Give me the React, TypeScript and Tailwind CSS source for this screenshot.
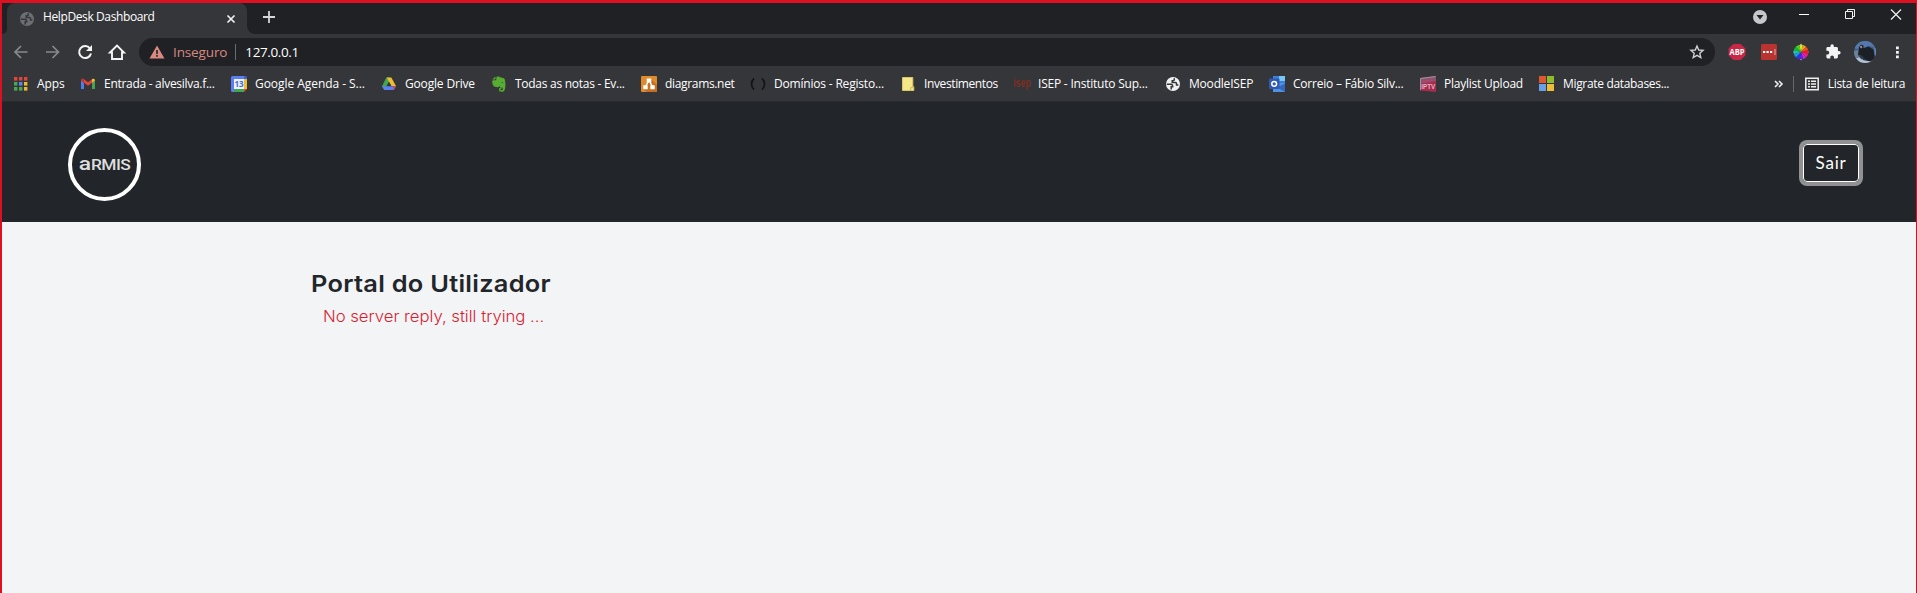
import { useLayoutEffect, useRef, useState, type ReactNode } from "react";

/* Text that spreads its letters over a given advance width. */
function Label({ w, className = "", children }: { w: number; className?: string; children: string }) {
  const ref = useRef<HTMLSpanElement>(null);
  const [spacing, setSpacing] = useState(0);
  useLayoutEffect(() => {
    if (ref.current) {
      const natural = ref.current.offsetWidth - spacing * children.length;
      setSpacing((w - natural) / children.length);
    }
  }, [w, children]);
  return (
    <span ref={ref} style={{ letterSpacing: `${spacing}px` }} className={`shrink-0 whitespace-nowrap ${className}`}>
      {children}
    </span>
  );
}

function Icon({ size = 16, children }: { size?: number; children: ReactNode }) {
  return (
    <svg width={size} height={size} viewBox={`0 0 ${size} ${size}`} className="shrink-0" fill="none">
      {children}
    </svg>
  );
}

const Globe = ({ color, back }: { color: string; back: string }) => (
  <Icon>
    <circle cx="8" cy="8" r="7" fill={color} />
    <path d="M1.8 8.300h4.200q1.700.2 1.700 1.800v.7h-1.500v2.700M9.300 2.200v1.400q0 1.200-1.400 1.200H7.200v1.700h3.300q1 0 1 1.300v1.300h1.900" stroke={back} strokeWidth="1.500" />
  </Icon>
);

const AppsIcon = () => (
  <Icon>
    {[
      ["#e0453a", "#e0453a", "#e0453a"],
      ["#4aa851", "#5a85ee", "#eeb932"],
      ["#4aa851", "#4aa851", "#eeb932"],
    ].map((row, r) =>
      row.map((c, i) => <rect key={`${r}${i}`} x={1 + i * 5} y={1 + r * 5} width="3.4" height="3.6" fill={c} />),
    )}
  </Icon>
);

const GmailIcon = () => (
  <Icon>
    <path d="M1 4v9h3V7z" fill="#4a7df0" />
    <path d="M15 4v9h-3V7z" fill="#41a554" />
    <path d="M1 4.5C1 2.8 2.8 2.2 4 3.2l4 3 4-3v3.6L8 9.8 4 6.8 1 4.7z" fill="#e0453a" />
    <path d="M12 3.2c1.2-1 3-.4 3 1.3L12 7z" fill="#f1bd30" />
    <path d="M1 4.5C1 3.2 2.5 2.4 4 3.2V7z" fill="#bd342d" />
  </Icon>
);

const CalendarIcon = () => (
  <Icon>
    <path d="M0 1.5Q0 0 1.5 0H13v3H3v13H1.5Q0 16 0 14.5z" fill="#5b7ff0" />
    <path d="M13 0h1.5Q16 0 16 1.5V13h-3z" fill="#3a63d8" />
    <rect x="13" y="3" width="3" height="10" fill="#f1bd30" />
    <rect x="3" y="13" width="10" height="3" fill="#41a554" />
    <path d="M13 13h3l-3 3z" fill="#e0453a" />
    <rect x="3" y="3" width="10" height="10" fill="#eef1fb" />
    <text x="8" y="11" textAnchor="middle" fontSize="8" fontWeight="700" fontFamily="Open Sans, sans-serif" fill="#426bd8">
      13
    </text>
  </Icon>
);

const DriveIcon = () => (
  <Icon>
    <path d="M5.3 1.5h3L8 6.2 3.6 14 1 10.2z" fill="#41a554" />
    <path d="M5.8 1.5h4.5L15 10h-4.8z" fill="#f1bd30" />
    <path d="M1 10.2h14L12.8 14H3.3z" fill="#5b7ff0" />
    <path d="M8 5.7 10.4 10H5.6z" fill="#35363a" />
    <path d="M12 10.2h3L12.8 14z" fill="#e0453a" />
  </Icon>
);

const EvernoteIcon = () => (
  <Icon>
    <path
      d="M5.5.8C7 .2 8.3.5 9 1.3l3 .6c1.6.3 1.8 1.3 2.1 3 .4 2.500.5 5.500-.2 8.300-.5 2-1.700 2.500-3.200 2.500-2 0-2.700-1-2.700-2.300 0-1.500 1-2 2.600-1.900v1.300c-.8 0-1.200.2-1.200.7 0 .6.500.8 1.200.8.9 0 1.200-.6 1.200-1.700 0-.8-.5-1.300-1.600-1.400-.9-.1-1.600-.400-1.800-1.300-.6 1.300-1.700 1.400-3 1.200C2.700 10.700 1.500 9.900 1.200 5.300c0-.7.3-1 .9-1h2.200c.7 0 1-.3 1-1z"
      fill="#56ad32"
    />
    <path d="M1.300 3.500 4.500.600v2.200c0 .5-.2.7-.7.7z" fill="#56ad32" />
    <path d="M10.500 6.900c.2-1 1.600-.9 1.900.2z" fill="#35363a" />
  </Icon>
);

const DiagramsIcon = () => (
  <Icon>
    <rect width="16" height="16" rx="1" fill="#df8a2c" />
    <path d="m10 3 6 6v7H6l-4-3z" fill="#c57020" />
    <path d="M8 4 4.500 11M8 4l3.500 7" stroke="#fff" strokeWidth="1.500" />
    <path d="M5.700 2.500h4.600v4H5.700zM2.300 9.300h4.400v4H2.300zM9.300 9.300h4.400v4H9.300z" fill="#fff" />
  </Icon>
);

const BracketsIcon = () => (
  <Icon>
    <path d="M4 2.500C.7 5.500.7 10.500 4 13.500M12 2.500c3.400 3 3.400 8 0 11" stroke="#121315" strokeWidth="1.700" />
  </Icon>
);

const NoteIcon = () => (
  <Icon>
    <path d="M2.500 1.500h10.300v9.300h1v3.700H2.500z" fill="#f5e789" stroke="#d9c768" />
    <path d="M10.800 14.500v-3.200h3" stroke="#cbb75a" />
  </Icon>
);

const IsepIcon = () => (
  <span className="flex h-4 w-4 shrink-0 items-center justify-center">
    <span className="-mt-1 inline-block scale-x-[0.68] font-['Liberation_Sans'] text-[13px] leading-none font-bold text-[#7b2f22]">isep</span>
  </span>
);

const OutlookIcon = () => (
  <Icon>
    <path d="M4 0h12v11H4z" fill="#3d7fda" />
    <path d="M10 0h6v5h-6z" fill="#78c6f3" />
    <path d="M4 7h12v9H4z" fill="#4f94e4" />
    <path d="m8 11.500 8-4V16z" fill="#3568bd" />
    <rect y="2.500" width="10.500" height="10.500" rx="1" fill="#3059b3" />
    <circle cx="5.200" cy="7.800" r="2.400" stroke="#fff" strokeWidth="1.500" />
  </Icon>
);

const IptvIcon = () => (
  <Icon>
    <path d="M0 2 16 0v16L0 14.500z" fill="#a82c50" />
    <path d="M0 2 16 0v5L0 8z" fill="#83576f" />
    <path d="M.5 14V2.500L15.500.6" stroke="#a3919c" />
    <text x="8.300" y="13" textAnchor="middle" fontSize="8" fontWeight="700" fontFamily="Liberation Sans, sans-serif" textLength="14" lengthAdjust="spacingAndGlyphs" fill="#e2b3c2">
      IPTV
    </text>
    <path d="M2.500 5.300 13 4" stroke="#c23d6c" strokeWidth="1.800" strokeDasharray="2 .6" />
  </Icon>
);

const MicrosoftIcon = () => (
  <Icon>
    <path d="M0 0h7v7H0z" fill="#dc5830" />
    <path d="M8 0h7v7H8z" fill="#8fbc2b" />
    <path d="M0 8h7v7H0z" fill="#679fe9" />
    <path d="M8 8h7v7H8z" fill="#ecbd37" />
  </Icon>
);

type Bookmark = { label: string; w: number; cell: string; icon: ReactNode };

const bookmarks: Bookmark[] = [
  { label: "Apps", w: 27.5, cell: "w-[67px]", icon: <AppsIcon /> },
  { label: "Entrada - alvesilva.f...", w: 111, cell: "w-[151px]", icon: <GmailIcon /> },
  { label: "Google Agenda - S...", w: 110, cell: "w-[150px]", icon: <CalendarIcon /> },
  { label: "Google Drive", w: 70, cell: "w-[110px]", icon: <DriveIcon /> },
  { label: "Todas as notas - Ev...", w: 110, cell: "w-[150px]", icon: <EvernoteIcon /> },
  { label: "diagrams.net", w: 69, cell: "w-[109px]", icon: <DiagramsIcon /> },
  { label: "Domínios - Registo...", w: 110, cell: "w-[150px]", icon: <BracketsIcon /> },
  { label: "Investimentos", w: 74, cell: "w-[114px]", icon: <NoteIcon /> },
  { label: "ISEP - Instituto Sup...", w: 110, cell: "w-[151px]", icon: <IsepIcon /> },
  { label: "MoodleISEP", w: 64, cell: "w-[104px]", icon: <Globe color="#f1f1f1" back="#35363a" /> },
  { label: "Correio – Fábio Silv...", w: 110, cell: "w-[151px]", icon: <OutlookIcon /> },
  { label: "Playlist Upload", w: 78.5, cell: "w-[119px]", icon: <IptvIcon /> },
  { label: "Migrate databases...", w: 106.5, cell: "w-[140px]", icon: <MicrosoftIcon /> },
];

function TabStrip() {
  return (
    <div className="flex h-[31px] bg-[#35363a]">
      <div className="h-full w-[5px] rounded-br-lg bg-[#202124]" />
      <div className="h-full w-[240px] bg-[#202124]">
        <div className="flex h-full w-full items-center rounded-t-lg bg-[#35363a] pr-2 pl-3">
          <Globe color="#6b6e72" back="#35363a" />
          <Label w={111} className="-mt-[3px] ml-2 text-[12px] text-white">HelpDesk Dashboard</Label>
          <svg width="10" height="10" viewBox="0 0 10 10" className="mr-[3px] ml-auto">
            <path d="m1.500 1.500 7 7m0-7-7 7" stroke="#f0f0f0" strokeWidth="1.700" />
          </svg>
        </div>
      </div>
      <div className="flex h-full flex-1 rounded-bl-lg bg-[#202124]">
        <svg width="12" height="12" viewBox="0 0 12 12" className="mt-2 ml-4">
          <path d="M6 0v12M0 6h12" stroke="#d5d6d8" strokeWidth="1.800" />
        </svg>
        <svg width="160" height="28" viewBox="0 0 160 28" fill="none" className="mr-[10px] ml-auto">
          <circle cx="14" cy="14" r="7" fill="#c4c7cc" />
          <path d="M10.500 12h7L14 16.500z" fill="#202124" />
          <path d="M53 11.500h10" stroke="#fff" />
          <path d="M99.500 8.500h7v7h-7zM101.500 8.500v-2h7v7h-2" stroke="#f2f2f2" />
          <path d="m145 6.500 10 10m0-10-10 10" stroke="#f2f2f2" strokeWidth="1.200" />
        </svg>
      </div>
    </div>
  );
}

const wheel = ["#c9ec24", "#f5a020", "#f0521e", "#ee1c24", "#ee2090", "#c724d6", "#5a22df", "#2638e8", "#1d9bea", "#18c9a5", "#13bb35", "#50d027"];

function Toolbar() {
  return (
    <div className="flex h-9 items-center bg-[#35363a]">
      <svg width="116" height="20" viewBox="0 0 116 20" fill="none" className="ml-[10px] shrink-0">
        <path d="M15.500 10H3.500m5.500-6-6 6 6 6" stroke="#88898c" strokeWidth="1.700" />
        <path d="M34 10h12m-5.500-6 6 6-6 6" stroke="#88898c" strokeWidth="1.700" />
        <path d="M78 6.500A6 6 0 1 0 79 11.500" stroke="#f4f4f4" strokeWidth="2" />
        <path d="M80 3v6h-6z" fill="#f4f4f4" />
        <path d="M98 10.500 105 3.500l7 7h-2V17h-10v-6.500z" stroke="#f4f4f4" strokeWidth="1.900" />
      </svg>
      <div className="ml-[11px] flex h-7 w-[1576px] items-center rounded-full bg-[#202124]">
        <svg width="16" height="14" viewBox="0 0 16 14" className="ml-2.5">
          <path d="M8 .5 15.500 13.500H.5z" fill="#d88980" />
          <path d="M8 5v4M8 10v1.800" stroke="#202124" strokeWidth="1.600" />
        </svg>
        <Label w={54} className="ml-2 text-[13.5px] text-[#d88980]">Inseguro</Label>
        <div className="ml-2 h-4 w-px bg-[#6b6c6f]" />
        <Label w={53.5} className="ml-[9px] text-[13.5px] text-white">127.0.0.1</Label>
        <svg width="16" height="16" viewBox="0 0 16 16" className="mr-2.5 ml-auto">
          <path d="m8 2 1.700 4 4.400.4-3.300 2.900 1 4.200L8 11.300l-3.800 2.200 1-4.200-3.300-2.900 4.400-.4z" fill="none" stroke="#cfd0d2" strokeWidth="1.400" />
        </svg>
      </div>
      <svg width="200" height="28" viewBox="0 0 200 28" fill="none" className="ml-px shrink-0">
        <path d="M17.300 6h7.400l4.800 4.800v6.400L24.700 22h-7.400l-4.800-4.800v-6.400z" fill="#c82748" />
        <text x="21" y="17" textAnchor="middle" fontSize="8.500" fontWeight="700" fontFamily="Open Sans, sans-serif" textLength="15" lengthAdjust="spacingAndGlyphs" fill="#fff">
          ABP
        </text>
        <rect x="45" y="6" width="16" height="16" rx="1.500" fill="#b93430" />
        <path d="M47 14h2.200m1.300 0h2.200m1.300 0h2.200" stroke="#fff" strokeWidth="2.200" />
        <path d="M59 11v6" stroke="#e6aaa8" />
        <path d="m85 5.500 1.500 2h-3zM85 22.500l1.500-2h-3zM77 14l2-1.500v3zM93 14l-2-1.500v3z" fill="#b9bbbd" />
        {wheel.map((c, i) => (
          <path key={c} d="M0 0 -1.900 -7.100A7.300 7.300 0 0 1 1.900 -7.100z" fill={c} transform={`translate(85 14) rotate(${i * 30})`} />
        ))}
        <path
          transform="translate(109 5.500) scale(.68)"
          d="M20.500 11H19V7c0-1.100-.9-2-2-2h-4V3.500a2.500 2.500 0 0 0-5 0V5H4c-1.100 0-2 .9-2 2v3.800h1.500c1.500 0 2.700 1.200 2.700 2.700S5 16.200 3.500 16.200H2V20c0 1.100.9 2 2 2h3.800v-1.500c0-1.500 1.200-2.700 2.700-2.700s2.700 1.200 2.700 2.700V22H17c1.100 0 2-.9 2-2v-4h1.500a2.500 2.500 0 0 0 0-5z"
          fill="#f3f4f6"
        />
        <clipPath id="avatar">
          <circle cx="149" cy="14" r="11" />
        </clipPath>
        <g clipPath="url(#avatar)" transform="translate(0 0)">
          <path d="M138 3h22v22h-22z" fill="#41618e" />
          <path d="M138 3h22v6l-8-1-5 4-9-2z" fill="#5478ad" />
          <path d="m138 13 5-1 3 4-2 4-6 1z" fill="#6f7f95" />
          <path d="m138 21 7-2 15 4v2h-22z" fill="#b3c0cf" />
          <path d="m143 9 2-2.500 2.500 1V10l5-1.500 5 3 1.500 9-4 3-8-1.500-1-4-4-1z" fill="#1b1f26" />
          <path d="m143.500 8.500 2-1 1 2-1.500 1z" fill="#9a8a84" />
          <path d="m142 17 4 1 4 4-5-1z" fill="#2a3b52" />
          <path d="m158 9 3 2v8l-2-1z" fill="#6b88b4" />
        </g>
        <path d="M180 8.500h2.800v2.800H180zM180 13h2.800v2.800H180zM180 17.500h2.800v2.800H180z" fill="#f3f3f3" />
      </svg>
    </div>
  );
}

function BookmarksBar() {
  return (
    <div className="flex h-8 items-center border-b border-[#292a2d] bg-[#35363a] pb-[3px] pl-[11px] text-[12px] text-white">
      {bookmarks.map((b) => (
        <div key={b.label} className={`flex shrink-0 items-center gap-2 ${b.cell}`}>
          {b.icon}
          <Label w={b.w} className="-mt-px">{b.label}</Label>
        </div>
      ))}
      <div className="ml-auto flex shrink-0 items-center pr-[11px]">
        <svg width="10" height="8" viewBox="0 0 10 8" fill="none">
          <path d="m1 1 3 3-3 3m4-6 3 3-3 3" stroke="#f1f1f1" strokeWidth="1.600" />
        </svg>
        <div className="ml-[9px] h-4 w-px bg-[#66676a]" />
        <svg width="14" height="14" viewBox="0 0 14 14" fill="none" className="ml-[11px]">
          <path d="M.8 1.300h12.400v11.400H.8z" stroke="#efefef" strokeWidth="1.500" />
          <path d="M3 4.200h2m1 0h5M3 7h2m1 0h5M3 9.800h2m1 0h5" stroke="#efefef" strokeWidth="1.400" />
        </svg>
        <Label w={77} className="-mt-px ml-[9px]">Lista de leitura</Label>
      </div>
    </div>
  );
}

function Logo() {
  return (
    <div className="flex h-[73px] w-[73px] items-center justify-center rounded-full border-[4.500px] border-4 border-white font-['Roboto'] text-[#dedede]">
      <div className="flex scale-x-[1.2] items-baseline leading-none font-medium">
        <Label w={10} className="text-[18.500px] text-[19px]">a</Label>
        <Label w={33} className="text-[14.5px]">RMIS</Label>
      </div>
    </div>
  );
}

export default function App() {
  return (
    <div className="flex h-[593px] w-[1917px] flex-col overflow-hidden border-t-[3px] border-r border-l-2 border-[#dc1020] bg-[#f3f4f6] font-['Open_Sans',sans-serif]">
      <TabStrip />
      <Toolbar />
      <BookmarksBar />
      <header className="flex h-[120px] shrink-0 items-center justify-between bg-[#22262a] pr-[57px] pl-[66px]">
        <div className="mt-1">
          <Logo />
        </div>
        <button className="mt-[2px] flex h-[38px] w-14 items-center justify-center rounded-[4px] border border-white text-white ring-4 ring-[#8f9193]">
          <Label w={31} className="-mt-px font-['Lato'] text-[17px]">Sair</Label>
        </button>
      </header>
      <main className="flex flex-col items-start pt-11 pl-[309px] font-['Inter']">
        <h1 className="flex leading-9 text-[#22262a]">
          <Label w={222} className="origin-left scale-x-[1.08] text-[23.5px] font-semibold">Portal do Utilizador</Label>
        </h1>
        <p className="mt-[3px] ml-3 flex leading-6 text-[#d61f33]">
          <Label w={205} className="origin-left scale-x-[1.08] text-[15.5px] font-light">No server reply, still trying ...</Label>
        </p>
      </main>
    </div>
  );
}
